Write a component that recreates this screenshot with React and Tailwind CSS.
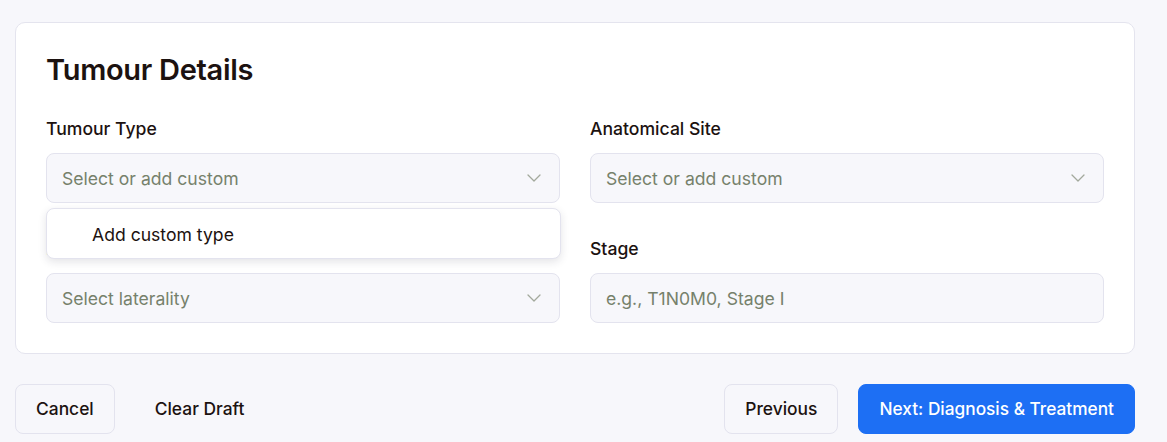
import React from 'react';

function Chevron() {
  return (
    <svg width="14" height="8" viewBox="0 0 14 8" fill="none" className="shrink-0">
      <path d="M1 1l6 6 6-6" stroke="#a3a99c" strokeWidth="1.3" strokeLinecap="round" strokeLinejoin="round" />
    </svg>
  );
}

function SelectBox({ placeholder }) {
  return (
    <div className="h-[50px] flex items-center justify-between pl-[15px] pr-[18px] rounded-lg border border-[#e3e3ee] bg-[#f7f7fb]">
      <span className="text-[17.6px] leading-6 pt-[2px] text-[#76816b]">{placeholder}</span>
      <Chevron />
    </div>
  );
}

function Field({ label, children }) {
  return (
    <div className="flex flex-col gap-3">
      <label className="text-[17.6px] leading-6 font-medium text-[#1c1210]">{label}</label>
      {children}
    </div>
  );
}

export default function App() {
  return (
    <div
      className="min-h-[442px] bg-[#f7f7fb] pt-[22px] pl-[15px] pr-[32px]"
      style={{ fontFamily: 'Inter, "Noto Sans", sans-serif' }}
    >
      {/* Card */}
      <section className="bg-white border border-[#e4e4ee] rounded-[10px] px-[30px] pt-[29px] pb-[30px]">
        <h2 className="text-[29px] leading-9 font-semibold text-[#1c1210] tracking-[-0.3px] mb-[29px]">Tumour Details</h2>

        <div className="grid grid-cols-2 gap-x-[30px] gap-y-[34px]">
          <Field label="Tumour Type">
            <div className="relative">
              <SelectBox placeholder="Select or add custom" />
              {/* Open dropdown, covers the Laterality label */}
              <div className="absolute left-0 right-[-1px] top-[55px] z-10 h-[51px] flex items-center pl-[45px] pt-[2px] bg-white border border-[#e3e3ee] rounded-lg shadow-[0_3px_8px_rgba(30,30,60,0.12)]">
                <span className="text-[17.6px] leading-6 text-[#1c1210]">Add custom type</span>
              </div>
            </div>
          </Field>
          <Field label="Anatomical Site">
            <SelectBox placeholder="Select or add custom" />
          </Field>
          <Field label="Laterality">
            <SelectBox placeholder="Select laterality" />
          </Field>
          <Field label="Stage">
            <div className="h-[50px] flex items-center pl-[15px] rounded-lg border border-[#e3e3ee] bg-[#f7f7fb]">
              <span className="text-[17.6px] leading-6 pt-[2px] text-[#76816b]">e.g., T1N0M0, Stage I</span>
            </div>
          </Field>
        </div>
      </section>

      {/* Actions */}
      <div className="flex items-center justify-between mt-[30px]">
        <div className="flex items-center gap-5">
          <button className="h-[50px] px-5 rounded-lg border border-[#e3e3ee] bg-[#f7f7fb] text-[17.4px] font-medium text-[#1c1210]">
            Cancel
          </button>
          <button className="h-[50px] px-5 rounded-lg text-[17.4px] font-medium text-[#1c1210]">
            Clear Draft
          </button>
        </div>
        <div className="flex items-center gap-5">
          <button className="h-[50px] px-5 rounded-lg border border-[#e3e3ee] bg-[#f7f7fb] text-[17.4px] font-medium text-[#1c1210]">
            Previous
          </button>
          <button className="h-[50px] px-5 rounded-lg border border-[#1d6ff4] bg-[#1d6ff4] text-[17.3px] font-medium text-white">
            Next: Diagnosis &amp; Treatment
          </button>
        </div>
      </div>
    </div>
  );
}
